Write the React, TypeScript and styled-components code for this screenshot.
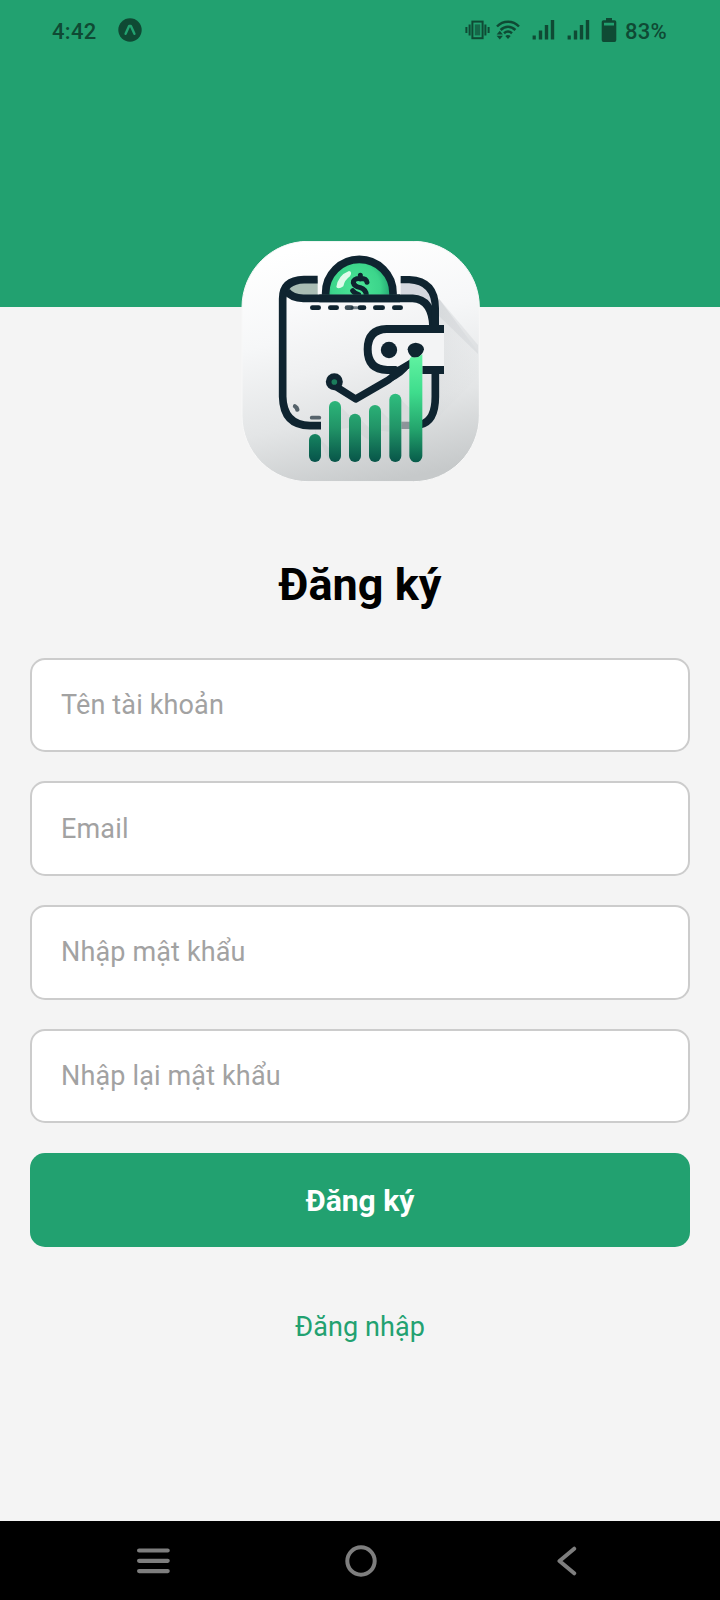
import React from "react";
import styled, { createGlobalStyle } from "styled-components";

const GREEN = "#22a170";
const STATUS = "#0f4a34";
const INK = "#0f2430";

const GlobalStyle = createGlobalStyle`
  *, *::before, *::after { box-sizing: border-box; }
  body { margin: 0; background: #f4f4f4; font-family: Roboto, "Noto Sans", sans-serif; }
`;

const Screen = styled.div`
  width: 720px;
  height: 1600px;
  display: flex;
  flex-direction: column;
  background: #f4f4f4;
  overflow: hidden;
`;

const Header = styled.header`
  height: 307px;
  flex: none;
  background: ${GREEN};
`;

const StatusBar = styled.div`
  height: 60px;
  padding: 0 53px 0 52px;
  display: flex;
  align-items: center;
  justify-content: space-between;
  color: ${STATUS};
`;

const StatusGroup = styled.div`
  display: flex;
  align-items: center;
`;

const StatusText = styled.span`
  font-size: 22px;
  font-weight: 500;
  line-height: 26px;
  padding-top: 3px;
  letter-spacing: 0.3px;
`;

const StatusIcon = styled.svg<{ $ml?: number; $mr?: number }>`
  display: block;
  flex: none;
  margin-left: ${(p) => p.$ml ?? 0}px;
  margin-right: ${(p) => p.$mr ?? 0}px;
`;

const LogoFrame = styled.div`
  width: 240px;
  height: 242px;
  margin: -66px auto 0;
  flex: none;

  svg { display: block; position: relative; }
`;

const Title = styled.h1`
  margin: 72px 0 0;
  height: 60px;
  flex: none;
  font-size: 45px;
  line-height: 60px;
  font-weight: 700;
  text-align: center;
  color: #000;
`;

const Form = styled.form`
  margin: 42.6px 30px 0;
  display: flex;
  flex-direction: column;
  gap: 29.4px;
`;

const Field = styled.input`
  width: 100%;
  height: 94.4px;
  padding: 0 30px 0 29px;
  border: 2px solid #ccc;
  border-radius: 15px;
  background: #fff;
  font-family: inherit;
  font-size: 27px;
  letter-spacing: 0.15px;
  color: #333;
  outline: none;

  &::placeholder { color: #a2a2a2; opacity: 1; }
`;

const SubmitButton = styled.button`
  height: 94.2px;
  padding: 1px 0 0;
  border: 0;
  border-radius: 15px;
  background: ${GREEN};
  color: #fff;
  font-family: inherit;
  font-size: 30px;
  font-weight: 700;
`;

const LoginLink = styled.a`
  margin: 60px auto 0;
  font-size: 27px;
  line-height: 40px;
  letter-spacing: 0.1px;
  color: ${GREEN};
`;

const NavBar = styled.nav`
  height: 79px;
  margin-top: auto;
  flex: none;
  padding: 0 143px 0 137px;
  display: grid;
  grid-template-columns: 33px 1fr 20px;
  align-items: center;
  background: #000;

  svg { display: block; }
`;

const HomeButton = styled.div`
  padding-left: 174.5px;
`;

const ExpoIcon = () => (
  <StatusIcon $ml={21} width="24" height="24" viewBox="0 0 24 24">
    <circle cx="12" cy="12" r="11.7" fill={STATUS} />
    <path d="M7.6 15.8 L11.1 8 H12.9 L16.4 15.8" fill="none" stroke={GREEN} strokeWidth="2.4" strokeLinecap="round" strokeLinejoin="round" />
  </StatusIcon>
);

const VibrateIcon = () => (
  <StatusIcon $mr={6} width="25" height="20" viewBox="0 0 25 20" fill={STATUS}>
    <rect x="0.4" y="7" width="2" height="6" />
    <rect x="3.6" y="4.5" width="2" height="11" />
    <rect x="19.4" y="4.5" width="2" height="11" />
    <rect x="22.6" y="7" width="2" height="6" />
    <rect x="7.4" y="1.6" width="10.2" height="16.6" fill="none" stroke={STATUS} strokeWidth="2" />
    <rect x="9.8" y="4.4" width="5.4" height="11" opacity="0.65" />
  </StatusIcon>
);

const WifiIcon = () => (
  <StatusIcon $mr={12} width="24" height="20" viewBox="0 0 24 20">
    <g fill="none" stroke={STATUS} strokeWidth="2.5">
      <path d="M1 6.5 C7 .1 17 .1 23 6.5" />
      <path d="M4.6 10 C9 5.6 15 5.6 19.4 10" />
      <path d="M8 13.2 C10.5 11 13.5 11 16 13.2" />
    </g>
    <path d="M9.3 16 Q12 13.8 14.7 16 L12 19 Z M0.6 14.5 L3.8 10.8 L6.9 14.5 Z M0.6 15.8 H6.9 L3.8 19.5 Z" fill={STATUS} />
  </StatusIcon>
);

const SignalIcon = ({ gap }: { gap: number }) => (
  <StatusIcon $mr={gap} width="23" height="20" viewBox="0 0 23 20" fill={STATUS}>
    <rect x="0.6" y="15.5" width="3.2" height="4" />
    <rect x="6.8" y="10.5" width="3.4" height="9" />
    <rect x="12.8" y="5" width="3.4" height="14.5" />
    <rect x="18.8" y="0" width="3.4" height="19.5" />
  </StatusIcon>
);

const BatteryIcon = () => (
  <StatusIcon $mr={8} width="16" height="24" viewBox="0 0 16 24">
    <path
      d="M5 0 H11 V2.2 H13.5 Q15.3 2.2 15.3 4 V22 Q15.3 24 13.5 24 H2.5 Q.7 24 .7 22 V4 Q.7 2.2 2.5 2.2 H5 Z M3 4.8 V7.5 H13 V4.8 Z"
      fill={STATUS}
      fillRule="evenodd"
    />
  </StatusIcon>
);

const BARS = [
  { x: 237, y: 612, fill: "url(#barShort)" },
  { x: 297, y: 513, fill: "url(#bar)" },
  { x: 357, y: 551, fill: "url(#bar)" },
  { x: 417, y: 525, fill: "url(#bar)" },
  { x: 478, y: 491, fill: "url(#bar)" },
];

const WalletLogo = () => (
  <svg width="240" height="242" viewBox="30 33 720 726" role="img" aria-label="Wallet">
    <defs>
      <linearGradient id="tile" x1="0.4" y1="0" x2="0.62" y2="1">
        <stop offset="0" stopColor="#ffffff" />
        <stop offset="0.35" stopColor="#f6f7f8" />
        <stop offset="0.7" stopColor="#e3e5e6" />
        <stop offset="1" stopColor="#c6c9ca" />
      </linearGradient>
      <linearGradient id="body" x1="0" y1="0" x2="0.3" y2="1">
        <stop offset="0" stopColor="#fcfcfd" />
        <stop offset="0.6" stopColor="#eff0f1" />
        <stop offset="1" stopColor="#e0e2e3" />
      </linearGradient>
      <radialGradient id="coin" cx="0.45" cy="0.42" r="0.6">
        <stop offset="0" stopColor="#4be597" />
        <stop offset="0.6" stopColor="#3cd58b" />
        <stop offset="1" stopColor="#188f65" />
      </radialGradient>
      <linearGradient id="bar" gradientUnits="userSpaceOnUse" x1="0" y1="491" x2="0" y2="697">
        <stop offset="0" stopColor="#2fbe7e" />
        <stop offset="0.5" stopColor="#219467" />
        <stop offset="1" stopColor="#075448" />
      </linearGradient>
      <linearGradient id="barShort" x1="0" y1="0" x2="0" y2="1">
        <stop offset="0" stopColor="#168460" />
        <stop offset="1" stopColor="#07534a" />
      </linearGradient>
      <linearGradient id="barTall" gradientUnits="userSpaceOnUse" x1="0" y1="372" x2="0" y2="697">
        <stop offset="0" stopColor="#62f3a2" />
        <stop offset="0.35" stopColor="#3fdd8d" />
        <stop offset="0.7" stopColor="#23a36c" />
        <stop offset="1" stopColor="#075b4a" />
      </linearGradient>
      <linearGradient id="shade" x1="0" y1="0" x2="0.6" y2="1">
        <stop offset="0" stopColor="#c2c6ca" stopOpacity="0.7" />
        <stop offset="1" stopColor="#cfd2d4" stopOpacity="0" />
      </linearGradient>
      <clipPath id="coinClip">
        <rect x="270" y="70" width="240" height="124" />
      </clipPath>
    </defs>

    <rect x="36" y="34" width="712" height="721" rx="198" fill="url(#tile)" stroke="#f8f8f8" strokeWidth="3" />
    <path d="M626 205 L744 365 V440 L626 560 V432 H642 V285 H626 Z" fill="url(#shade)" opacity="0.6" />
    <path d="M626 205 L744 345 V372 L626 257 Z" fill="#aeb4ba" opacity="0.2" />

    {/* wallet back and folded edge */}
    <path d="M157 200 Q160 150 218 149 H263 V205 H190 Z" fill="#a9bdb4" />
    <path d="M512 149 H540 Q615 152 616 225 L600 218 Q575 204 512 204 Z" fill="#d4d8df" />
    <path d="M158 195 Q175 207 210 207 H555 Q615 210 616 285 V500 Q614 585 540 586 H235 Q158 575 158 500 Z" fill="url(#body)" />
    <path d="M263 149 H222 Q158 151 158 206 V500 Q160 586 240 587 H273" fill="none" stroke={INK} strokeWidth="23" />
    <path d="M170 184 Q185 205 220 205 H548 Q607 208 609 290" fill="none" stroke={INK} strokeWidth="23" />
    <path d="M512 149 H538 Q616 153 616 235 V290" fill="none" stroke={INK} strokeWidth="22" />
    <path d="M514 586 H540" stroke="#8c9499" strokeWidth="22" />
    <path d="M616 425 V500 Q616 574 570 584" fill="none" stroke={INK} strokeWidth="23" />

    {/* coin */}
    <g clipPath="url(#coinClip)">
      <circle cx="388" cy="189" r="101" fill="url(#coin)" stroke={INK} strokeWidth="23" />
      <path d="M319 171 Q324 136 357 123 Q368 125 360 139 Q343 151 340 169 Q325 180 319 171 Z" fill="#dffbea" />
      <path d="M411 157 Q409 145 391 145 Q370 146 370 158 Q372 168 391 173 Q409 179 409 197 M391 136 V147 M368 182 Q374 190 386 194" fill="none" stroke={INK} strokeWidth="15" strokeLinecap="round" />
    </g>
    <path d="M268 205 H510" stroke={INK} strokeWidth="23" />

    {/* stitching */}
    <g stroke={INK} strokeWidth="14" strokeLinecap="round">
      <path d="M247 233 H266 M301 233 H320 M390 233 H402 M436 233 H458 M493 233 H512" />
      <path d="M351 233 H364" opacity="0.8" />
      <path d="M366 233 H382" strokeWidth="9" opacity="0.55" />
    </g>
    <path d="M195 529 Q201 532 202 539" fill="none" stroke="#56636b" strokeWidth="13" strokeLinecap="round" />
    <path d="M245 563 H268" stroke="#56636b" strokeWidth="11" strokeLinecap="round" />

    {/* clasp */}
    <path d="M642 297 H465 Q412 302 412 358 Q412 418 468 420 H642 Z" fill="#f3f4f5" />
    <path d="M642 297 H470 Q413 299 413 358 Q413 419 472 420 H500" fill="none" stroke={INK} strokeWidth="24" />
    <path d="M577 420 H642" stroke={INK} strokeWidth="24" />
    <circle cx="477" cy="360" r="24.5" fill={INK} />
    <path d="M533 358 Q535 340 557 338 Q580 340 582 358 Q579 372 564 383 H548 Q534 373 533 358 Z" fill={INK} />

    {/* trend line */}
    <path d="M318 470 L377 507 L465 456 Q488 443 500 425 L542 400" fill="none" stroke={INK} strokeWidth="22" strokeLinejoin="round" />
    <path d="M477 410 H512 L541 388 V408 Q520 440 482 455 Z" fill={INK} />
    <circle cx="313" cy="455" r="25.5" fill={INK} />
    <circle cx="313" cy="456" r="8.5" fill="#1b7d5b" />

    {/* chart bars */}
    {BARS.map((b) => (
      <path key={b.x} d={`M${b.x + 18} ${b.y} l42 42 V${b.y + 80} L${b.x + 18} 600 Z`} fill="#a7acaf" opacity="0.12" />
    ))}
    {BARS.map((b) => (
      <rect key={b.x} x={b.x} y={b.y} width="36" height={696 - b.y} rx="18" fill={b.fill} />
    ))}
    <path d="M538 390 Q541 378 549 382 Q563 385 577 373 V678 A19.5 19 0 0 1 538 678 Z" fill="url(#barTall)" />
  </svg>
);

const FIELDS = [
  { label: "Tên tài khoản", type: "text" },
  { label: "Email", type: "email" },
  { label: "Nhập mật khẩu", type: "password" },
  { label: "Nhập lại mật khẩu", type: "password" },
];

export default function App() {
  return (
    <>
      <GlobalStyle />
      <Screen>
        <Header>
          <StatusBar>
            <StatusGroup>
              <StatusText>4:42</StatusText>
              <ExpoIcon />
            </StatusGroup>
            <StatusGroup>
              <VibrateIcon />
              <WifiIcon />
              <SignalIcon gap={12} />
              <SignalIcon gap={11} />
              <BatteryIcon />
              <StatusText>83%</StatusText>
            </StatusGroup>
          </StatusBar>
        </Header>
        <LogoFrame>
          <WalletLogo />
        </LogoFrame>
        <Title>Đăng ký</Title>
        <Form>
          {FIELDS.map((f) => (
            <Field key={f.label} type={f.type} placeholder={f.label} />
          ))}
          <SubmitButton type="button">Đăng ký</SubmitButton>
        </Form>
        <LoginLink>Đăng nhập</LoginLink>
        <NavBar>
          <svg width="33" height="26" viewBox="0 0 33 26" stroke="#7e7e7e" strokeWidth="4.2" strokeLinecap="round">
            <path d="M2.1 2.5 H30.7 M2.1 12.8 H30.7 M2.1 23.1 H30.7" />
          </svg>
          <HomeButton>
            <svg width="32" height="32" viewBox="0 0 32 32" fill="none" stroke="#7e7e7e" strokeWidth="4">
              <circle cx="16" cy="16" r="13.7" />
            </svg>
          </HomeButton>
          <svg width="20" height="30" viewBox="0 0 20 30" fill="none" stroke="#7e7e7e" strokeWidth="4" strokeLinecap="round" strokeLinejoin="round">
            <path d="M17.2 2.7 L2.5 15 L17.2 27.3" />
          </svg>
        </NavBar>
      </Screen>
    </>
  );
}
